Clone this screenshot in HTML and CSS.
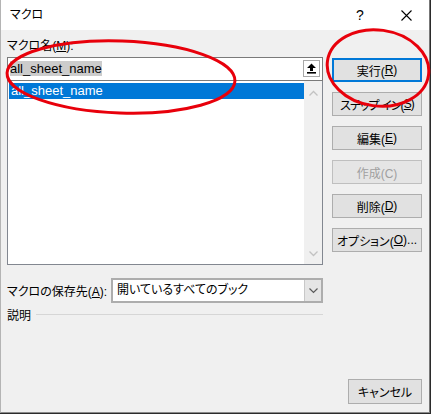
FILE: index.html
```html
<!DOCTYPE html>
<html lang="ja">
<head>
<meta charset="utf-8">
<title>マクロ</title>
<link rel="stylesheet" href="styles.css">
</head>
<body>
<div class="window">
  <div class="titlebar">
    <div class="title">マクロ</div>
    <div class="capbtn help">?</div>
    <div class="capbtn close">
      <svg width="11" height="11" viewBox="0 0 11 11"><path d="M0.5 0.5 L10.5 10.5 M10.5 0.5 L0.5 10.5" stroke="#000" stroke-width="1.1" fill="none"/></svg>
    </div>
  </div>
  <div class="client">
    <div class="main">
      <div class="left">
        <div class="label">マクロ名(<u>M</u>):</div>
        <div class="namebox">
          <div class="nametext"><span class="sel">all_sheet_name</span></div>
          <div class="upbtn">
            <svg width="11" height="11" viewBox="0 0 11 11"><path d="M5.5 0.5 L10 5 L7 5 L7 8 L4 8 L4 5 L1 5 Z" fill="#000"/><rect x="1" y="9" width="9" height="1.6" fill="#000"/></svg>
          </div>
        </div>
        <div class="list">
          <div class="items">
            <div class="row selected">all_sheet_name</div>
          </div>
          <div class="scroll">
            <svg width="9" height="6" viewBox="0 0 9 6"><path d="M0.5 5.5 L4.5 1.5 L8.5 5.5" stroke="#c2c2c2" stroke-width="1.3" fill="none"/></svg>
            <svg width="9" height="6" viewBox="0 0 9 6"><path d="M0.5 0.5 L4.5 4.5 L8.5 0.5" stroke="#c2c2c2" stroke-width="1.3" fill="none"/></svg>
          </div>
        </div>
        <div class="store">
          <div class="storelabel">マクロの保存先(<u>A</u>):</div>
          <div class="dropdown">
            <div class="ddtext">開いているすべてのブック</div>
            <div class="ddbtn">
              <svg width="9" height="6" viewBox="0 0 9 6"><path d="M0.5 0.5 L4.5 4.5 L8.5 0.5" stroke="#5a5a5a" stroke-width="1.2" fill="none"/></svg>
            </div>
          </div>
        </div>
        <div class="desc">
          <span>説明</span>
          <div class="rule"></div>
        </div>
      </div>
      <div class="right">
        <div class="btn default">実行(<u>R</u>)</div>
        <div class="btn tight">ステップ イン(<u>S</u>)</div>
        <div class="btn">編集(<u>E</u>)</div>
        <div class="btn disabled">作成(C)</div>
        <div class="btn">削除(<u>D</u>)</div>
        <div class="btn">オプション(<u>O</u>)...</div>
      </div>
    </div>
    <div class="footer">
      <div class="btn cancel">キャンセル</div>
    </div>
  </div>
</div>
<svg class="marks" width="431" height="414" viewBox="0 0 431 414">
  <ellipse cx="121" cy="77" rx="114" ry="36" transform="rotate(2 121 77)" fill="none" stroke="#e8000b" stroke-width="3"/>
  <ellipse cx="378" cy="68" rx="51" ry="38" transform="rotate(8 378 68)" fill="none" stroke="#e8000b" stroke-width="3"/>
</svg>
</body>
</html>
```
FILE: styles.css
```css
* { box-sizing: border-box; }
html, body { margin: 0; padding: 0; }
body {
  width: 431px;
  height: 414px;
  background: #2b2b2b;
  font-family: "Liberation Sans", "Noto Sans CJK JP", sans-serif;
  font-size: 12px;
  font-feature-settings: "palt";
  color: #000;
  position: relative;
  overflow: hidden;
}
u { text-decoration: underline; text-decoration-thickness: 1px; text-underline-offset: 1px; }
.window {
  width: 430px;
  height: 413px;
  border-left: 1px solid #b4b4b4;
  border-right: 1px solid #777;
  border-bottom: 1px solid #8a8a8a;
  background: #f0f0f0;
  display: flex;
  flex-direction: column;
}
.titlebar {
  height: 30px;
  background: #fff;
  display: flex;
  align-items: center;
  padding-left: 9px;
}
.title { flex: 1; line-height: 16px; }
.capbtn {
  width: 46px;
  height: 30px;
  display: flex;
  align-items: center;
  justify-content: center;
}
.help { font-size: 14px; }
.client {
  flex: 1;
  display: flex;
  flex-direction: column;
  padding: 9px 7px 8px 6px;
}
.main { display: flex; }
.left { width: 316px; display: flex; flex-direction: column; }
.right {
  width: 90px;
  margin-left: 9px;
  padding-top: 19px;
  display: flex;
  flex-direction: column;
  gap: 10px;
}
.label { height: 15px; line-height: 15px; margin-bottom: 3px; }
.namebox {
  height: 24px;
  border: 1px solid #7a7a7a;
  background: #fff;
  display: flex;
}
.nametext {
  flex: 1;
  padding-left: 2px;
  padding-top: 3px;
  font-size: 13px;
  line-height: 15px;
}
.sel { background: #cccccc; }
.upbtn {
  width: 17px;
  height: 17px;
  margin: 2px 2px 0 0;
  border: 1px solid #a9a9a9;
  background: #fff;
  display: flex;
  align-items: center;
  justify-content: center;
}
.list {
  height: 184px;
  border: 1px solid #828790;
  border-top: none;
  background: #fff;
  display: flex;
}
.items { flex: 1; padding: 2px 0 0 1px; }
.row {
  height: 16px;
  line-height: 16px;
  padding-left: 2px;
  font-size: 13px;
}
.row.selected { background: #0078d7; color: #fff; }
.scroll {
  width: 18px;
  background: #f0f0f0;
  display: flex;
  flex-direction: column;
  justify-content: space-between;
  align-items: center;
  padding: 9px 0 7px;
}
.store {
  margin-top: 13px;
  height: 25px;
  display: flex;
  align-items: center;
}
.storelabel { width: 104px; }
.dropdown {
  width: 212px;
  height: 25px;
  border: 2px solid #adadad;
  background: #fff;
  display: flex;
}
.ddtext { flex: 1; padding-left: 4px; line-height: 21px; }
.ddbtn {
  width: 17px;
  background: #e5e5e5;
  border-left: 1px solid #c8c8c8;
  display: flex;
  align-items: center;
  justify-content: center;
}
.desc {
  margin-top: 4px;
  height: 15px;
  display: flex;
  align-items: center;
}
.rule { flex: 1; margin-left: 5px; border-top: 1px solid #d6d6d6; }
.btn {
  height: 24px;
  background: #e1e1e1;
  border: 1px solid #adadad;
  display: flex;
  align-items: center;
  justify-content: center;
  white-space: nowrap;
}
.btn.tight { letter-spacing: -0.9px; }
.btn.default { border: 2px solid #0078d7; }
.btn.disabled { color: #a0a0a0; border-color: #bfbfbf; background: #e5e5e5; }
.footer { margin-top: auto; display: flex; justify-content: flex-end; }
.cancel { width: 74px; height: 25px; }
.marks { position: absolute; left: 0; top: 0; pointer-events: none; }
```
